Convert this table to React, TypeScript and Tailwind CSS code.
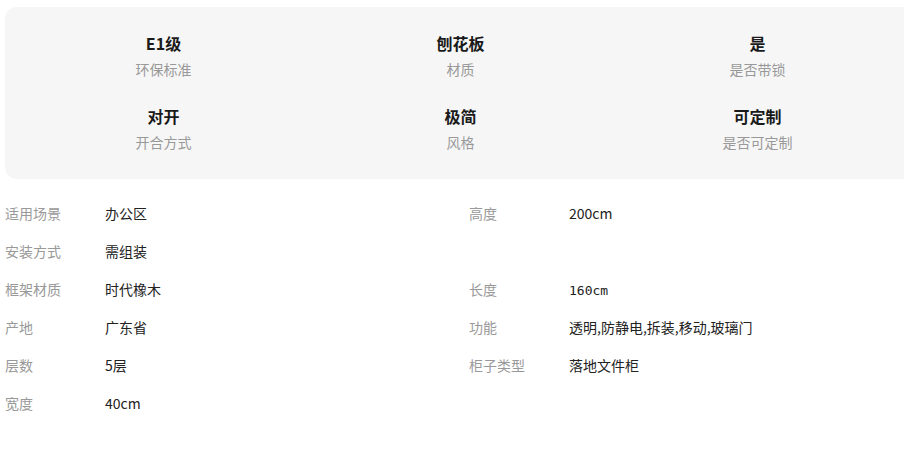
import React from "react";

const font = { fontFamily: '"Noto Sans CJK SC", "Noto Sans", sans-serif' };

const features = [
  { title: "E1级", label: "环保标准" },
  { title: "刨花板", label: "材质" },
  { title: "是", label: "是否带锁" },
  { title: "对开", label: "开合方式" },
  { title: "极简", label: "风格" },
  { title: "可定制", label: "是否可定制" },
];

type Spec = { label: string; value: string; mono?: boolean } | null;

const rows: [Spec, Spec][] = [
  [{ label: "适用场景", value: "办公区" }, { label: "高度", value: "200cm" }],
  [{ label: "安装方式", value: "需组装" }, null],
  [{ label: "框架材质", value: "时代橡木" }, { label: "长度", value: "160cm", mono: true }],
  [{ label: "产地", value: "广东省" }, { label: "功能", value: "透明,防静电,拆装,移动,玻璃门" }],
  [{ label: "层数", value: "5层" }, { label: "柜子类型", value: "落地文件柜" }],
  [{ label: "宽度", value: "40cm" }, null],
];

function Cell({ spec }: { spec: Spec }) {
  if (!spec) return <div className="flex-1" />;
  return (
    <div className="flex flex-1 items-center">
      <div className="w-[100px] shrink-0 text-[14px] leading-[20px] text-[#999999]">{spec.label}</div>
      {spec.mono ? (
        <div
          className="pt-[4px] text-[13px] leading-[20px] text-[#222222]"
          style={{ fontFamily: '"DejaVu Sans Mono", "Noto Sans CJK SC", monospace' }}
        >
          {spec.value}
        </div>
      ) : (
        <div className="text-[14px] leading-[20px] text-[#222222]">{spec.value}</div>
      )}
    </div>
  );
}

export default function App() {
  return (
    <div className="w-[904px] h-[471px] overflow-hidden bg-white" style={font}>
      <div className="ml-[5px] mt-[7px] w-[911px] rounded-[12px] bg-[#f6f6f6] px-[10px] pt-[24px] pb-[27px]">
        <div className="grid grid-cols-3 gap-y-[25px]">
          {features.map((f) => (
            <div key={f.label} className="flex flex-col items-center">
              <div className="text-[16px] font-bold leading-[24px] text-[#1a1a1a]">{f.title}</div>
              <div className="mt-[4px] text-[14px] leading-[20px] text-[#999999]">{f.label}</div>
            </div>
          ))}
        </div>
      </div>
      <div className="ml-[5px] mt-[15px] flex flex-col">
        {rows.map((r, i) => (
          <div key={i} className="flex h-[38px] items-center">
            <div className="w-[464px] shrink-0 flex">
              <Cell spec={r[0]} />
            </div>
            <div className="flex flex-1">
              <Cell spec={r[1]} />
            </div>
          </div>
        ))}
      </div>
    </div>
  );
}
